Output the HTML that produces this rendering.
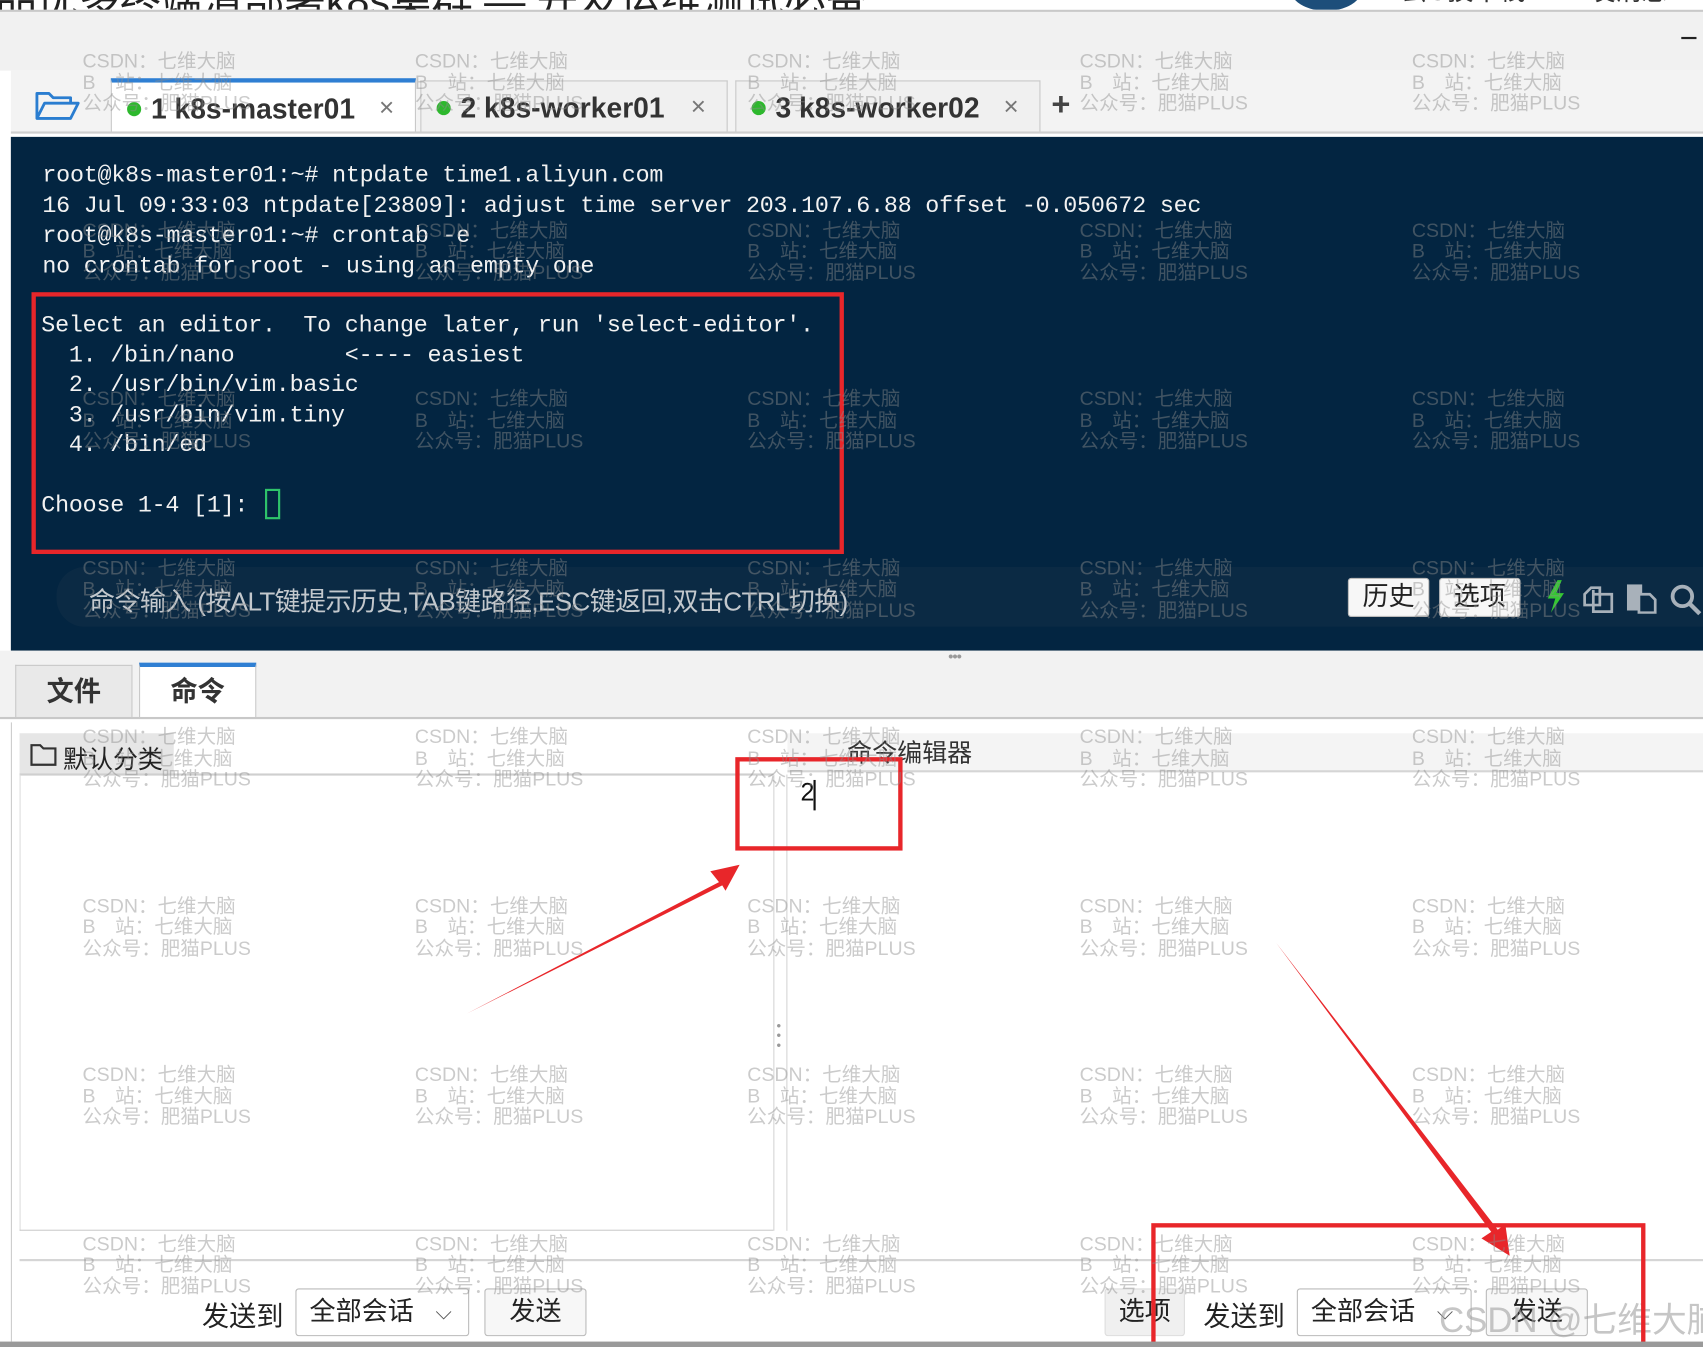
<!DOCTYPE html>
<html><head><meta charset="utf-8"><style>
*{margin:0;padding:0;box-sizing:border-box}
body{width:1703px;height:1347px;overflow:hidden;background:#fff;font-family:"Liberation Sans","Noto Sans CJK SC",sans-serif}
#w{position:absolute;left:0;top:0;width:1568px;height:1240px;transform:scale(1.0861,1.0863);transform-origin:0 0;overflow:hidden;background:#fff}
.a{position:absolute}
.mono{font-family:"Liberation Mono","DejaVu Sans Mono",monospace;color:#f2f2f2;font-size:21.5px;white-space:pre;letter-spacing:-0.2px}
.tab{position:absolute;top:74px;height:48px;border:1px solid #c8c8c8;border-bottom:none;font-size:26px;font-weight:bold;color:#333;padding-left:14px;line-height:48px;white-space:nowrap}
.dot{display:inline-block;width:13px;height:13px;border-radius:50%;background:#2db82d;margin-right:9px;vertical-align:2px}
.x{position:absolute;font-weight:normal;color:#777;font-size:24px}
.wm{position:absolute;font-size:18px;line-height:19.5px;color:rgba(140,140,140,.45);white-space:pre;pointer-events:none}
.btn{position:absolute;background:#f7f7f7;border:1px solid #bbb;border-radius:3px;font-size:24px;color:#222;text-align:center}
.red{position:absolute;border:4px solid #e8262a}
</style></head><body><div id="w">
<div class="a" style="left:0;top:0;width:1568px;height:9px;background:#fff;overflow:hidden"><div style="position:absolute;top:-30px;left:-4px;font-size:38px;color:#222;white-space:nowrap">品优多终端清部署k8s集群 — 开发运维测试必备..</div><div style="position:absolute;left:1188px;top:-30px;width:66px;height:40px;border-radius:50%;background:#1d4e7a"></div><div style="position:absolute;left:1290px;top:-28px;font-size:24px;color:#333">云G技术栈 　☐ 发消息</div></div>
<div class="a" style="left:0;top:9px;width:1568px;height:2px;background:#c9c9c9"></div>
<div class="a" style="left:0;top:11px;width:1568px;height:54px;background:#f1f1f1"></div>
<div class="a" style="left:1548px;top:34px;width:14px;height:2px;background:#222"></div>
<div class="a" style="left:10px;top:65px;width:1558px;height:58px;background:#f3f3f3"></div>
<svg class="a" style="left:32px;top:82px" width="42" height="30" viewBox="0 0 42 30"><path d="M2 27V4h11l4 4h16v5 M2 27l7-14h31l-7 14z" fill="none" stroke="#2a7dd0" stroke-width="2.6" stroke-linejoin="round"/></svg>
<div class="tab" style="left:102px;width:281px;background:#fff;border-top:4px solid #2f7fd3;top:72px;height:50px">
<span class="dot"></span>1 k8s-master01<span class="x" style="left:246px">×</span></div>
<div class="tab" style="left:387px;width:283px;background:#f0f0f0"><span class="dot"></span>2 k8s-worker01<span class="x" style="left:248px">×</span></div>
<div class="tab" style="left:677px;width:281px;background:#f0f0f0"><span class="dot"></span>3 k8s-worker02<span class="x" style="left:246px">×</span></div>
<div class="a" style="left:968px;top:80px;font-size:30px;font-weight:bold;color:#444">+</div>
<div class="a" style="left:10px;top:121px;width:1558px;height:2px;background:#cfcfcf"></div>
<div class="a" style="left:10px;top:126px;width:1558px;height:473px;background:#032541"></div>
<div class="a mono" style="left:39px;top:148px;line-height:28px">root@k8s-master01:~# ntpdate time1.aliyun.com
16 Jul 09:33:03 ntpdate[23809]: adjust time server 203.107.6.88 offset -0.050672 sec
root@k8s-master01:~# crontab -e
no crontab for root - using an empty one</div>
<div class="a mono" style="left:38px;top:287px;line-height:27.6px">Select an editor.  To change later, run 'select-editor'.
  1. /bin/nano        &lt;---- easiest
  2. /usr/bin/vim.basic
  3. /usr/bin/vim.tiny
  4. /bin/ed

Choose 1-4 [1]: </div>
<div class="a" style="left:244px;top:450px;width:14px;height:28px;border:2px solid #2ec36a"></div>
<div class="red" style="left:29px;top:269px;width:748px;height:241px"></div>
<div class="a" style="left:52px;top:522px;width:1516px;height:55px;background:#0b2a44;border-radius:26px 0 0 26px"></div>
<div class="a" style="left:82px;top:534px;font-size:24px;color:#c3c8cd;white-space:nowrap;letter-spacing:-0.6px">命令输入 (按ALT键提示历史,TAB键路径,ESC键返回,双击CTRL切换)</div>
<div class="btn" style="left:1241px;top:532px;width:75px;height:36px;line-height:34px">历史</div>
<div class="btn" style="left:1325px;top:532px;width:75px;height:36px;line-height:34px">选项</div>
<svg class="a" style="left:1422px;top:533px" width="20" height="32" viewBox="0 0 20 32"><path d="M12 1L3 18h7l-4 13 12-18h-7l5-12z" fill="#35c832"/></svg>
<svg class="a" style="left:1456px;top:535px" width="32" height="30" viewBox="0 0 32 30"><path d="M3 12l6-6h8v16H3z M11 12h17v16H11z M11 12V8" fill="none" stroke="#a8b1ba" stroke-width="2.5"/></svg>
<svg class="a" style="left:1497px;top:535px" width="30" height="30" viewBox="0 0 30 30"><rect x="1" y="3" width="14" height="24" fill="#a8b1ba"/><path d="M12 12h10l5 5v12H12z" fill="#0b2a44" stroke="#a8b1ba" stroke-width="2.5"/></svg>
<svg class="a" style="left:1537px;top:537px" width="31" height="30" viewBox="0 0 31 30"><circle cx="12" cy="12" r="9" fill="none" stroke="#a8b1ba" stroke-width="3.5"/><path d="M19 19l9 9" stroke="#a8b1ba" stroke-width="4"/></svg>
<div class="a" style="left:0;top:599px;width:1568px;height:62px;background:#f2f2f2"></div>
<div class="a" style="left:873px;top:596px;font-size:14px;color:#999;letter-spacing:-1px">•••</div>
<div class="a" style="left:14px;top:612px;width:108px;height:48px;background:#e9e9e9;border:1px solid #c8c8c8;border-bottom:none;font-size:25px;font-weight:bold;color:#333;text-align:center;line-height:48px">文件</div>
<div class="a" style="left:128px;top:610px;width:108px;height:51px;background:#fff;border:1px solid #c8c8c8;border-top:4px solid #2f7fd3;border-bottom:none;font-size:25px;font-weight:bold;color:#333;text-align:center;line-height:46px">命令</div>
<div class="a" style="left:0;top:660px;width:1568px;height:2px;background:#c8c8c8"></div>
<div class="a" style="left:10px;top:665px;width:1px;height:570px;background:#ccc"></div>
<div class="a" style="left:18px;top:675px;width:142px;height:38px;background:#e6e6e6"></div>
<svg class="a" style="left:27px;top:684px" width="26" height="22" viewBox="0 0 26 22"><path d="M2 20V2h8l3 3h11v15z" fill="none" stroke="#333" stroke-width="2"/></svg>
<div class="a" style="left:58px;top:680px;font-size:23px;color:#222">默认分类</div>
<div class="a" style="left:18px;top:712px;width:694px;height:2px;background:#cfcfcf"></div>
<div class="a" style="left:18px;top:713px;width:1px;height:420px;background:#ddd"></div>
<div class="a" style="left:712px;top:713px;width:1px;height:420px;background:#d5d5d5"></div>
<div class="a" style="left:724px;top:713px;width:1px;height:420px;background:#d5d5d5"></div>
<div class="a" style="left:715px;top:940px;font-size:12px;color:#999;line-height:9px">•<br>•<br>•</div>
<div class="a" style="left:725px;top:675px;width:843px;height:34px;background:#f4f4f4"></div>
<div class="a" style="left:780px;top:674px;font-size:23px;color:#333">命令编辑器</div>
<div class="a" style="left:725px;top:709px;width:843px;height:2px;background:#d5d5d5"></div>
<div class="a" style="left:737px;top:716px;font-size:23px;color:#111">2</div>
<div class="a" style="left:749px;top:718px;width:1.5px;height:28px;background:#111"></div>
<div class="red" style="left:677px;top:697px;width:154px;height:86px"></div>
<div class="a" style="left:18px;top:1132px;width:694px;height:1px;background:#ccc"></div>
<div class="a" style="left:18px;top:1159px;width:1550px;height:2px;background:#d5d5d5"></div>
<div class="a" style="left:186px;top:1192px;font-size:25px;color:#222">发送到</div>
<div class="btn" style="left:272px;top:1186px;width:160px;height:44px;line-height:42px;text-align:left;padding-left:12px;background:#fff">全部会话 <span style="position:absolute;left:128px;font-size:20px;color:#555">⌵</span></div>
<div class="btn" style="left:446px;top:1186px;width:94px;height:44px;line-height:42px">发送</div>
<div class="btn" style="left:1017px;top:1186px;width:74px;height:44px;line-height:42px;background:#f0f0f0;border-color:#ddd">选项</div>
<div class="a" style="left:1108px;top:1192px;font-size:25px;color:#222">发送到</div>
<div class="btn" style="left:1194px;top:1186px;width:161px;height:44px;line-height:42px;text-align:left;padding-left:12px;background:#fff">全部会话 <span style="position:absolute;left:128px;font-size:20px;color:#555">⌵</span></div>
<div class="btn" style="left:1368px;top:1186px;width:94px;height:44px;line-height:42px">发送</div>
<div class="a" style="left:1325px;top:1190px;font-size:32px;color:rgba(160,160,160,.6);white-space:nowrap">CSDN @七维大脑</div>
<div class="red" style="left:1060px;top:1126px;width:455px;height:118px"></div>
<div class="a" style="left:0;top:1235px;width:1568px;height:5px;background:#9a9a9a"></div>
<svg class="a" style="left:0;top:0" width="1568" height="1240">
<polygon points="430,933 662,812 654,802 681,796 668,820 665,815" fill="#e8262a"/>
<polygon points="1175,868 1373,1134 1364,1140 1390,1156 1386,1127 1379,1132" fill="#e8262a"/>
</svg>
<div id="wms"></div>
</div>
<script>
var h='';var xs=[76,382,688,994,1300];
for(var r=0;r<8;r++){for(var c=0;c<5;c++){h+='<div class="wm" style="left:'+xs[c]+'px;top:'+(47+r*155.5)+'px">CSDN：七维大脑\nB　站：七维大脑\n公众号：肥猫PLUS</div>';}}
document.getElementById('wms').outerHTML=h;
</script>
</body></html>
